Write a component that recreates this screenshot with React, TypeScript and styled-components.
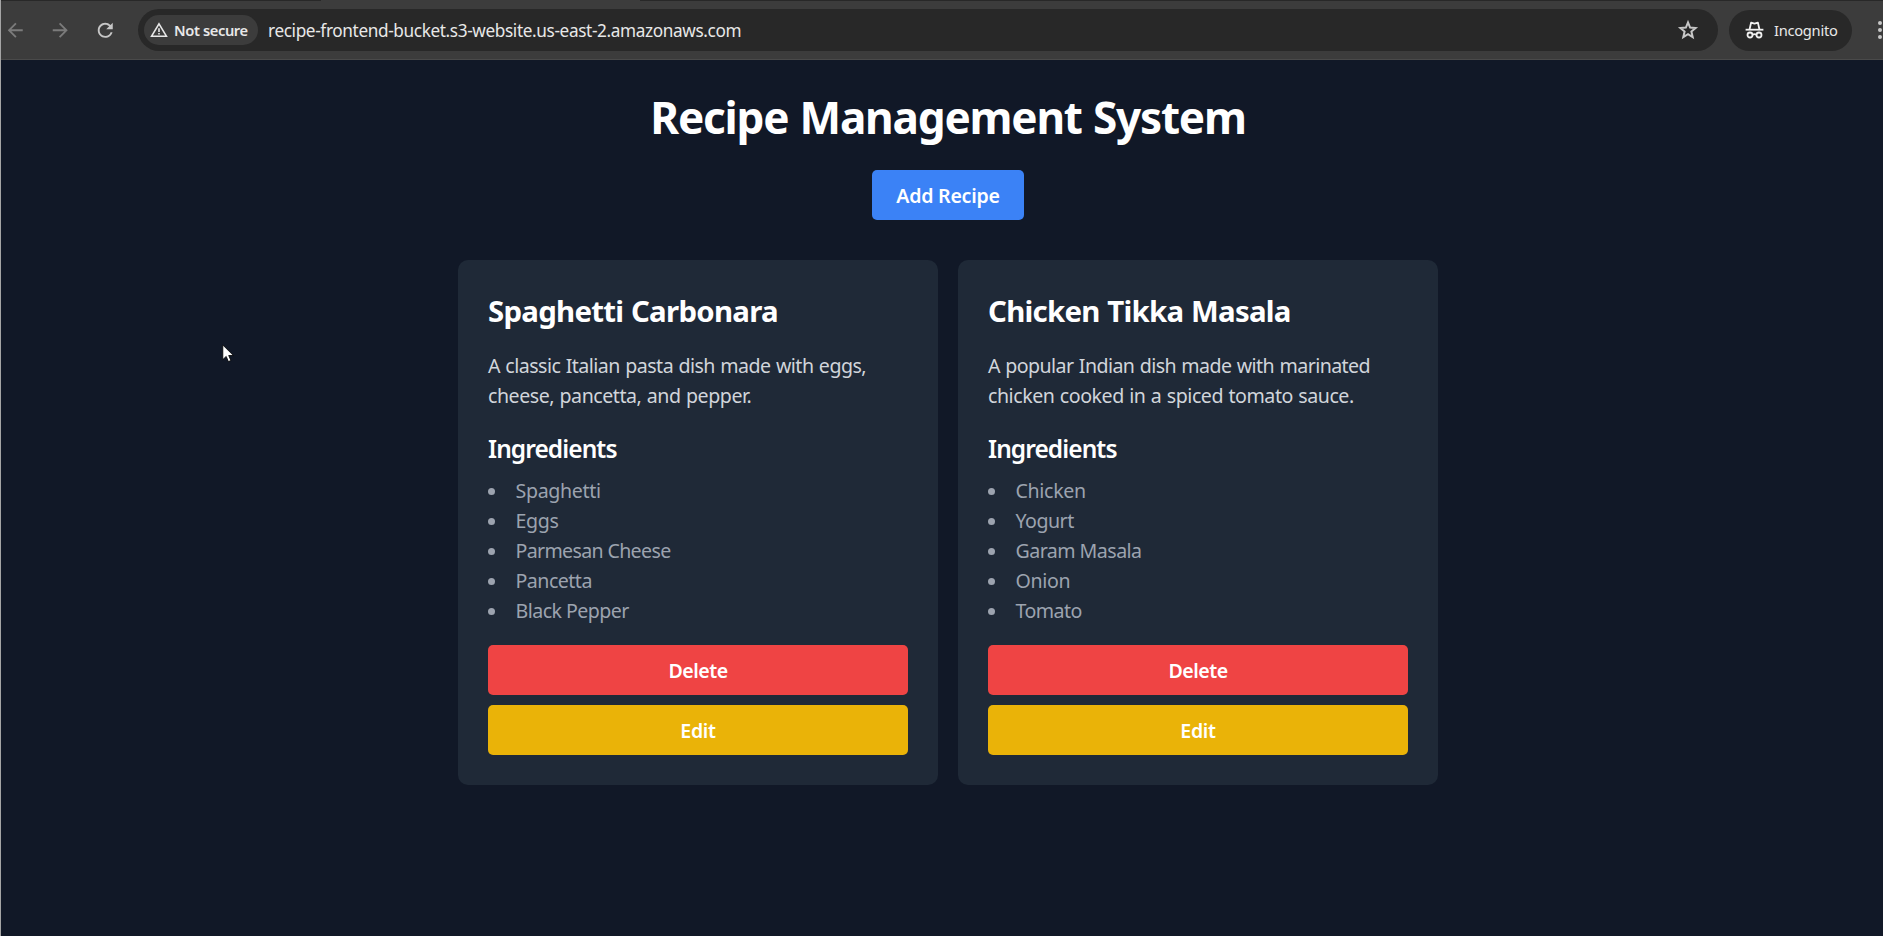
import React from "react";
import styled, { createGlobalStyle } from "styled-components";
import { MdArrowBack, MdArrowForward, MdRefresh } from "react-icons/md";

const GlobalStyle = createGlobalStyle`
  *, *::before, *::after { box-sizing: border-box; }
  html, body { margin: 0; padding: 0; height: 936px; overflow: hidden; background: #111827; }
  body { font-family: "Segoe UI", "Noto Sans", sans-serif; color: #fff; }
  h1, h2, h3, p, ul { margin: 0; padding: 0; }
`;

const Window = styled.div`
  width: 1895px;
  height: 936px;
  display: flex;
  flex-direction: column;
  border-left: 1px solid #a5a5a5;
  background: #111827;
`;

/* Browser toolbar */

const Toolbar = styled.header`
  height: 60px;
  flex: none;
  display: flex;
  align-items: center;
  padding-top: 1px;
  background:
    linear-gradient(#282828, #282828) 0 0 / 320px 1px no-repeat,
    linear-gradient(#282828, #282828) 639px 0 / 1255px 1px no-repeat,
    #3c3c3c;
  border-bottom: 1px solid #4a4a4a;
`;

const NavButtons = styled.nav`
  width: 137px;
  flex: none;
  display: flex;
  gap: 22.5px;
  padding-left: 3px;
`;

const NavIcon = styled.span<{ $disabled?: boolean }>`
  display: flex;
  color: ${(p) => (p.$disabled ? "#7b7b7b" : "#c7c7c7")};
  svg { width: 22.5px; height: 22.5px; }
`;

const AddressBar = styled.div`
  width: 1580px;
  height: 42px;
  flex: none;
  display: flex;
  align-items: center;
  padding: 0 19px 0 6px;
  border-radius: 21px;
  background: #282828;
`;

const SecurityChip = styled.div`
  width: 114px;
  height: 30px;
  display: flex;
  align-items: center;
  gap: 6px;
  padding-left: 6px;
  border-radius: 15px;
  background: #3c3c3c;
`;

const Label = styled.span<{ $size: number; $weight?: number; $tracking: number }>`
  font-size: ${(p) => p.$size}px;
  font-weight: ${(p) => p.$weight ?? 400};
  letter-spacing: ${(p) => p.$tracking}px;
  color: #e8e8e8;
  line-height: 20px;
  padding-bottom: 1px;
  white-space: nowrap;
`;

const Url = styled.div`
  flex: 1;
  padding: 3px 0 0 10px;
  display: flex;
`;

const IncognitoChip = styled.div`
  width: 123px;
  height: 41px;
  flex: none;
  display: flex;
  align-items: center;
  gap: 10px;
  margin-left: 11px;
  padding-left: 16px;
  border-radius: 21px;
  background: #282828;
`;

const MenuDots = styled.div`
  margin-left: 26px;
  display: flex;
  flex-direction: column;
  gap: 3px;
`;

const Dot = styled.i`
  width: 4px;
  height: 4px;
  border-radius: 50%;
  background: #c7c7c7;
`;

/* Page */

const Page = styled.main`
  flex: 1;
  display: flex;
  flex-direction: column;
  align-items: center;
  padding-top: 32px;
`;

const Title = styled.h1`
  font-size: 44.1px;
  font-weight: 700;
  line-height: 50px;
  letter-spacing: -1.22px;
  word-spacing: 1px;
  margin-bottom: 28px;
`;

const Button = styled.button<{ $color: string; $tracking: number; $width?: string }>`
  width: ${(p) => p.$width ?? "100%"};
  height: 50px;
  padding: 1px 0 0;
  border: 0;
  border-radius: 5px;
  background: ${(p) => p.$color};
  color: #fff;
  font-family: inherit;
  font-size: 19.6px;
  font-weight: 600;
  letter-spacing: ${(p) => p.$tracking}px;
`;

const Grid = styled.section`
  display: grid;
  grid-template-columns: 480px 480px;
  gap: 20px;
  margin-top: 40px;
`;

const Card = styled.article`
  height: 525px;
  padding: 30px;
  border-radius: 10px;
  background: #1f2937;
`;

const CardTitle = styled.h2`
  height: 40px;
  font-size: 29.4px;
  font-weight: 700;
  line-height: 42px;
  letter-spacing: -0.72px;
  word-spacing: 0.6px;
  margin-bottom: 21px;
`;

const Description = styled.p`
  font-size: 19.6px;
  line-height: 30px;
  color: #d1d5db;
  word-spacing: 0.8px;
  margin-bottom: 20px;
`;

const Line = styled.span<{ $tracking: number }>`
  display: block;
  white-space: nowrap;
  letter-spacing: ${(p) => p.$tracking}px;
`;

const Subtitle = styled.h3`
  font-size: 24.5px;
  font-weight: 600;
  line-height: 35px;
  letter-spacing: -0.93px;
  margin-bottom: 10px;
`;

const IngredientList = styled.ul`
  list-style: none;
  font-size: 19.6px;
  line-height: 30px;
  color: #9ca3af;
  margin-bottom: 19px;
`;

const Ingredient = styled.li<{ $tracking: number }>`
  display: flex;
  align-items: center;
  gap: 20.5px;
  height: 30px;
  letter-spacing: ${(p) => p.$tracking}px;
  &::before {
    content: "";
    width: 7px;
    height: 7px;
    margin-top: 1px;
    border-radius: 50%;
    background: #9ca3af;
  }
`;

const Actions = styled.div`
  display: grid;
  gap: 10px;
`;

const Pointer = styled.svg`
  position: absolute;
  left: 222px;
  top: 344px;
`;

type Tracked = [text: string, tracking: number];

interface Recipe {
  title: string;
  description: Tracked[];
  ingredients: Tracked[];
}

const recipes: Recipe[] = [
  {
    title: "Spaghetti Carbonara",
    description: [
      ["A classic Italian pasta dish made with eggs,", -0.53],
      ["cheese, pancetta, and pepper.", -0.46],
    ],
    ingredients: [
      ["Spaghetti", -0.34],
      ["Eggs", -0.3],
      ["Parmesan Cheese", -0.66],
      ["Pancetta", -0.52],
      ["Black Pepper", -0.54],
    ],
  },
  {
    title: "Chicken Tikka Masala",
    description: [
      ["A popular Indian dish made with marinated", -0.57],
      ["chicken cooked in a spiced tomato sauce.", -0.46],
    ],
    ingredients: [
      ["Chicken", -0.33],
      ["Yogurt", -0.5],
      ["Garam Masala", -0.54],
      ["Onion", -0.3],
      ["Tomato", -0.55],
    ],
  },
];

const WarningIcon = () => (
  <svg width="18" height="16" viewBox="0 0 18 16" fill="none" stroke="#e8e8e8" strokeWidth="1.6">
    <path d="M9 1.9 16.4 14.2H1.6Z" />
    <path d="M9 6.2V10M9 11V12.6" />
  </svg>
);

const StarIcon = () => (
  <svg width="22" height="22" viewBox="0 0 22 22" fill="none" stroke="#c7c7c7" strokeWidth="2">
    <path d="M11 3.4 13.1 8.6 18.6 9 14.4 12.6 15.7 18.1 11 15.2 6.3 18.1 7.6 12.6 3.4 9 8.9 8.6Z" />
  </svg>
);

const IncognitoIcon = () => (
  <svg width="19" height="18" viewBox="0 0 19 18" fill="none" stroke="#f1f1f1" strokeWidth="1.8">
    <path d="M.6 8.7H18.4" />
    <path d="M4.6 8.2 6.1 1.6 9.5 2.6 12.9 1.6 14.4 8.2" strokeLinejoin="round" />
    <circle cx="5" cy="14" r="2.5" />
    <circle cx="14" cy="14" r="2.5" />
    <path d="M7.5 13.6Q9.5 12.6 11.5 13.6" />
  </svg>
);

export default function App() {
  return (
    <Window>
      <GlobalStyle />
      <Toolbar>
        <NavButtons>
          <NavIcon $disabled><MdArrowBack /></NavIcon>
          <NavIcon $disabled><MdArrowForward /></NavIcon>
          <NavIcon><MdRefresh /></NavIcon>
        </NavButtons>
        <AddressBar>
          <SecurityChip>
            <WarningIcon />
            <Label $size={14.7} $weight={600} $tracking={-0.4}>Not secure</Label>
          </SecurityChip>
          <Url>
            <Label $size={17.2} $tracking={-0.37}>
              recipe-frontend-bucket.s3-website.us-east-2.amazonaws.com
            </Label>
          </Url>
          <StarIcon />
        </AddressBar>
        <IncognitoChip>
          <IncognitoIcon />
          <Label $size={14.7} $tracking={-0.28}>Incognito</Label>
        </IncognitoChip>
        <MenuDots><Dot /><Dot /><Dot /></MenuDots>
      </Toolbar>
      <Page>
        <Title>Recipe Management System</Title>
        <Button $color="#3b82f6" $tracking={-0.25} $width="152px">Add Recipe</Button>
        <Grid>
          {recipes.map((recipe) => (
            <Card key={recipe.title}>
              <CardTitle>{recipe.title}</CardTitle>
              <Description>
                {recipe.description.map(([text, tracking]) => (
                  <Line key={text} $tracking={tracking}>{text}</Line>
                ))}
              </Description>
              <Subtitle>Ingredients</Subtitle>
              <IngredientList>
                {recipe.ingredients.map(([text, tracking]) => (
                  <Ingredient key={text} $tracking={tracking}>{text}</Ingredient>
                ))}
              </IngredientList>
              <Actions>
                <Button $color="#ef4444" $tracking={-0.5}>Delete</Button>
                <Button $color="#eab308" $tracking={-0.3}>Edit</Button>
              </Actions>
            </Card>
          ))}
        </Grid>
      </Page>
      <Pointer width="13" height="19" viewBox="0 0 13 19">
        <path d="M.8 1V15.6L4.2 12.4 6.4 17.6 8.9 16.5 6.7 11.5H11.4Z" fill="#fff" stroke="#000" strokeWidth=".8" />
      </Pointer>
    </Window>
  );
}
